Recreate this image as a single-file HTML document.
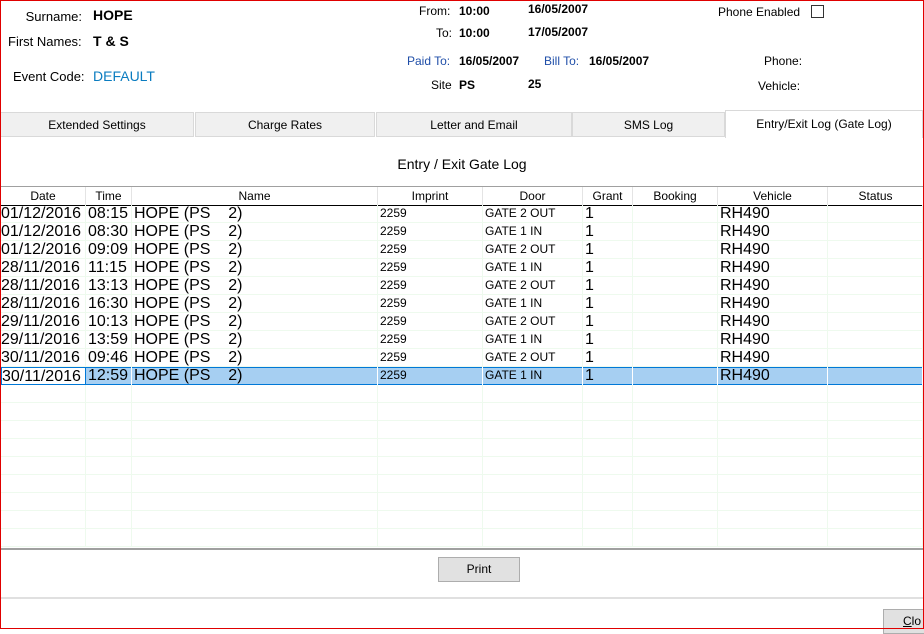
<!DOCTYPE html><html><head><style>
*{margin:0;padding:0;box-sizing:border-box}
body{width:924px;height:629px;overflow:hidden;background:#fff;font-family:"Liberation Sans",sans-serif;position:relative}
.a{position:absolute;white-space:nowrap}
.l{font-size:12px;color:#000}
.b{font-size:12px;font-weight:bold}
.tab{position:absolute;top:112px;height:25px;background:#f0f0f0;border:1px solid #d9d9d9;font-size:12px;text-align:center;line-height:25px}
.row{position:absolute;left:1px;width:922px;height:18px;border-bottom:1px solid #eefaee}
.c{position:absolute;top:0;height:18px;line-height:18px;font-size:16px;overflow:hidden;border-right:1px solid #eefaee;padding-left:2px}
.s{font-size:12px;line-height:16px}
.h{position:absolute;top:187px;height:18px;font-size:12px;text-align:center;line-height:18px;border-right:1px solid #e4e4e4}
</style></head><body>
<div class="a" style="left:0;top:0;width:924px;height:629px;border:1px solid #e00000;z-index:9;pointer-events:none"></div>
<div class="a l" style="right:842px;top:9px;font-size:13px">Surname:</div>
<div class="a" style="left:93px;top:7px;font-size:14px;font-weight:bold">HOPE</div>
<div class="a l" style="left:8px;top:34px;font-size:13px">First Names:</div>
<div class="a" style="left:93px;top:33px;font-size:14px;font-weight:bold">T &amp; S</div>
<div class="a l" style="left:13px;top:69px;font-size:13px">Event Code:</div>
<div class="a" style="left:93px;top:68px;font-size:14px;color:#0a7cc0">DEFAULT</div>
<div class="a l" style="left:419px;top:4px">From:</div><div class="a b" style="left:459px;top:4px">10:00</div>
<div class="a b" style="left:528px;top:2px">16/05/2007</div>
<div class="a l" style="left:436px;top:26px">To:</div><div class="a b" style="left:459px;top:26px">10:00</div>
<div class="a b" style="left:528px;top:25px">17/05/2007</div>
<div class="a l" style="left:407px;top:54px;color:#1f4ea8">Paid To:</div><div class="a b" style="left:459px;top:54px">16/05/2007</div>
<div class="a l" style="left:544px;top:54px;color:#1f4ea8">Bill To:</div><div class="a b" style="left:589px;top:54px">16/05/2007</div>
<div class="a l" style="left:431px;top:78px">Site</div><div class="a b" style="left:459px;top:78px">PS</div>
<div class="a b" style="left:528px;top:77px">25</div>
<div class="a l" style="left:718px;top:5px">Phone Enabled</div>
<div class="a" style="left:811px;top:5px;width:13px;height:13px;border:1px solid #333"></div>
<div class="a l" style="left:764px;top:54px">Phone:</div>
<div class="a l" style="left:758px;top:79px">Vehicle:</div>
<div class="tab" style="left:0;width:194px">Extended Settings</div>
<div class="tab" style="left:195px;width:180px">Charge Rates</div>
<div class="tab" style="left:376px;width:196px">Letter and Email</div>
<div class="tab" style="left:572px;width:153px">SMS Log</div>
<div class="a" style="left:725px;top:110px;width:198px;height:28px;background:#fff;border:1px solid #d9d9d9;border-bottom:none;font-size:12px;text-align:center;line-height:26px">Entry/Exit Log (Gate Log)</div>
<div class="a" style="left:0;top:156px;width:924px;text-align:center;font-size:14px">Entry / Exit Gate Log</div>
<div class="a" style="left:1px;top:186px;width:922px;height:20px;border-top:1px solid #a0a0a0;border-bottom:1px solid #000"></div>
<div class="h" style="left:1px;width:85px">Date</div>
<div class="h" style="left:86px;width:46px">Time</div>
<div class="h" style="left:132px;width:246px">Name</div>
<div class="h" style="left:378px;width:105px">Imprint</div>
<div class="h" style="left:483px;width:100px">Door</div>
<div class="h" style="left:583px;width:50px">Grant</div>
<div class="h" style="left:633px;width:85px">Booking</div>
<div class="h" style="left:718px;width:110px">Vehicle</div>
<div class="h" style="left:828px;width:95px;border:none">Status</div>
<div id="rows"></div>
<div class="a" style="left:1px;top:548px;width:922px;border-top:2px solid #a0a0a0"></div>
<div class="a" style="left:438px;top:557px;width:82px;height:25px;background:#e1e1e1;border:1px solid #adadad;font-size:12px;text-align:center;line-height:23px">Print</div>
<div class="a" style="left:1px;top:597px;width:922px;border-top:2px solid #e0e0e0"></div>
<div class="a" style="left:883px;top:609px;width:45px;height:25px;background:#e1e1e1;border:1px solid #adadad;font-size:12px;line-height:23px;padding-left:19px"><u>C</u>lo</div>
<script>
(function(){
var d=[["01/12/2016","08:15","GATE 2 OUT"],["01/12/2016","08:30","GATE 1 IN"],["01/12/2016","09:09","GATE 2 OUT"],["28/11/2016","11:15","GATE 1 IN"],["28/11/2016","13:13","GATE 2 OUT"],["28/11/2016","16:30","GATE 1 IN"],["29/11/2016","10:13","GATE 2 OUT"],["29/11/2016","13:59","GATE 1 IN"],["30/11/2016","09:46","GATE 2 OUT"],["30/11/2016","12:59","GATE 1 IN"]];
var cols=[[0,85],[85,46],[131,246],[377,105],[482,100],[582,50],[632,85],[717,110],[827,95]];
var h="";
for(var i=0;i<19;i++){var r=d[i];var y=205+18*i;var sel=i==9;
h+='<div class="row" style="top:'+y+'px;'+(sel?'background:#a6cff2;border-top:1px solid #0078d7;border-bottom:1px solid #0078d7;':'')+'">';
var v=r?[r[0],r[1],"HOPE (PS &nbsp;&nbsp;&nbsp;2)","2259",r[2],"1","","RH490",""]:["","","","","","","","",""];
for(var j=0;j<9;j++){var st='left:'+cols[j][0]+'px;width:'+cols[j][1]+'px;';
if(sel)st+='top:-1px;border-right-color:#fff;';
if(j==0){st+='padding-left:0;';if(sel)st+='background:#fff;border:1px solid #0078d7;';}
h+='<div class="c'+((j==3||j==4)?' s':'')+'" style="'+st+'">'+v[j]+'</div>';}
h+='</div>';}
document.getElementById("rows").innerHTML=h;
})();
</script>
</body></html>
